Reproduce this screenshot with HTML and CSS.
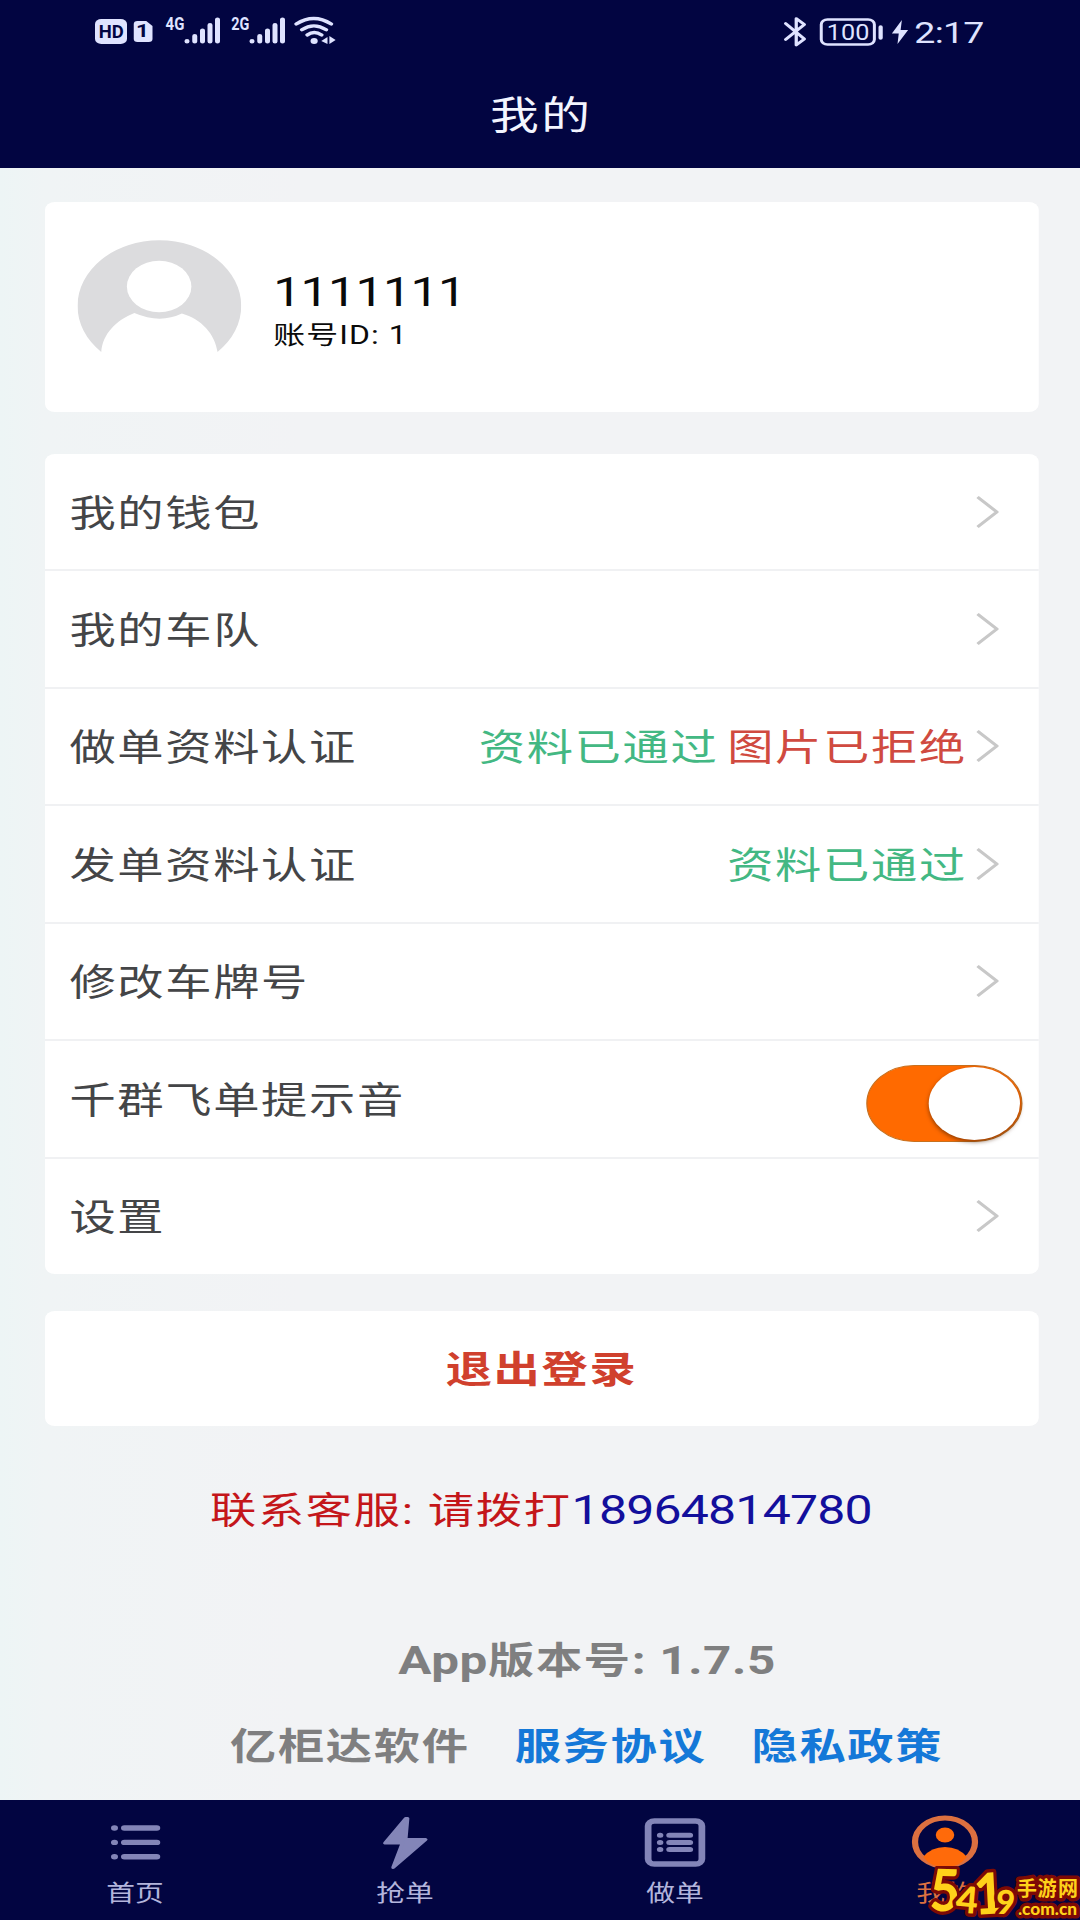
FILE: index.html
```html
<!DOCTYPE html>
<html lang="zh-CN">
<head>
<meta charset="utf-8">
<title>我的</title>
<link rel="stylesheet" href="styles.css">
</head>
<body>
<div class="screen">
  <header class="top">
    <div class="status">
      <svg class="status-left" viewBox="0 0 192 30" width="192" height="30">
        <rect x="0" y="4" width="25.6" height="25" rx="5" fill="#dfe3ff"/>
        <text x="3" y="22.8" class="st-hd" textLength="20" lengthAdjust="spacingAndGlyphs">HD</text>
        <path d="M34 6h7l5 5v13q0 3-3 3h-9q-3 0-3-3V9q0-3 3-3z" fill="#dfe3ff"/>
        <text x="38" y="22.5" class="st-hd" text-anchor="middle">1</text>
        <text x="56.5" y="15" class="st-net" textLength="15" lengthAdjust="spacingAndGlyphs">4G</text>
        <g stroke="#dfe3ff" stroke-width="4" stroke-linecap="round">
          <path d="M73.6 26v.5M79.8 21v5.500M86 15.500v11M92 10v16.500M98 4.500v22"/>
          <path d="M125.600 26v.5M131.800 21v5.500M138 15.500v11M144 10v16.500M150 4.500v22"/>
        </g>
        <text x="109" y="15" class="st-net" textLength="14.500" lengthAdjust="spacingAndGlyphs">2G</text>
        <g fill="none" stroke="#dfe3ff" stroke-width="3.200" stroke-linecap="round">
          <path d="M161 9q14-11 28 0M165.500 14.800q9.500-8 19.500 0M169.800 20q5.500-5 11.500 0"/>
        </g>
        <circle cx="175.300" cy="26" r="2.900" fill="#dfe3ff"/>
        <path d="M181 26l5-4v7zM187.500 21v8l5-4z" fill="#dfe3ff"/>
      </svg>
      <svg class="status-right" viewBox="0 0 164 32" width="164" height="32">
        <path d="M1.500 8.500l15 15.500-6.500 6V3.500l6.500 6L1.500 24.500" fill="none" stroke="#dfe3ff" stroke-width="2.600" stroke-linejoin="round" stroke-linecap="round"/>
        <rect x="30" y="4.500" width="42.500" height="25" rx="5" fill="none" stroke="#dfe3ff" stroke-width="2.400"/>
        <text x="34.500" y="25" class="st-batt" textLength="34" lengthAdjust="spacingAndGlyphs">100</text>
        <path d="M77.500 12v11" stroke="#dfe3ff" stroke-width="3.400" stroke-linecap="round"/>
        <path d="M94.500 5l-8 13.500h5.500L91 29l8.500-14H93.500z" fill="#dfe3ff"/>
        <text x="104.500" y="28" class="st-time" textLength="56">2:17</text>
      </svg>
    </div>
    <h1 class="title">我的</h1>
  </header>

  <main class="content">
    <section class="card profile">
      <svg class="avatar" viewBox="0 0 131 112" width="131" height="112">
        <path fill="#dcdcde" d="M19 112A65.500 65.500 0 1 1 112 112C110 94 99 79 83.500 73.500Q66 84 45.500 73C31 80 20 94 19 112z"/>
        <circle cx="65.300" cy="46.500" r="25.800" fill="#fff"/>
      </svg>
      <div class="who">
        <div class="name">1111111</div>
        <div class="uid">账号ID: 1</div>
      </div>
    </section>

    <section class="card menu">
      <div class="row"><span>我的钱包</span><svg class="chev" viewBox="0 0 18 34"><path d="M1 2l15.500 15L1 32"/></svg></div>
      <div class="row"><span>我的车队</span><svg class="chev" viewBox="0 0 18 34"><path d="M1 2l15.500 15L1 32"/></svg></div>
      <div class="row"><span>做单资料认证</span><div class="state"><span class="ok">资料已通过</span><span class="bad">图片已拒绝</span></div><svg class="chev" viewBox="0 0 18 34"><path d="M1 2l15.500 15L1 32"/></svg></div>
      <div class="row"><span>发单资料认证</span><div class="state"><span class="ok">资料已通过</span></div><svg class="chev" viewBox="0 0 18 34"><path d="M1 2l15.500 15L1 32"/></svg></div>
      <div class="row"><span>修改车牌号</span><svg class="chev" viewBox="0 0 18 34"><path d="M1 2l15.500 15L1 32"/></svg></div>
      <div class="row"><span>千群飞单提示音</span><div class="switch"><i class="knob"></i></div></div>
      <div class="row"><span>设置</span><svg class="chev" viewBox="0 0 18 34"><path d="M1 2l15.500 15L1 32"/></svg></div>
    </section>

    <button class="card logout">退出登录</button>
    <p class="support">联系客服: 请拨打<a class="phone">18964814780</a></p>
    <p class="version"><span class="latin">App</span>版本号<span class="latin">: 1.7.5</span></p>
    <p class="legal"><span>亿柜达软件</span><a>服务协议</a><a>隐私政策</a></p>
  </main>

  <nav class="tabs">
    <div class="tab">
      <svg viewBox="0 0 54 56" width="54" height="56"><g stroke="#8385b8" stroke-width="5.400" stroke-linecap="round"><path d="M10.500 14h.2M10.500 28.400h.2M10.500 42.800h.2M18.500 14h26M18.500 28.400h26M18.500 42.800h26"/></g></svg>
      <span>首页</span>
    </div>
    <div class="tab">
      <svg viewBox="0 0 54 56" width="54" height="56"><path d="M27.500 4.500L11 29h14l-7.500 24.500L43.500 25.500H27.500L29 4.500z" fill="#8385b8" stroke="#8385b8" stroke-width="3" stroke-linejoin="round"/></svg>
      <span>抢单</span>
    </div>
    <div class="tab">
      <svg viewBox="0 0 54 56" width="54" height="56"><rect x="5.500" y="7" width="43" height="43" rx="5" fill="none" stroke="#8385b8" stroke-width="5.400"/><g stroke="#8385b8" stroke-width="5" stroke-linecap="round"><path d="M15 21.200h.2M15 28.400h.2M15 35.600h.2M22.500 21.200h16.500M22.500 28.400h16.500M22.500 35.600h16.500"/></g></svg>
      <span>做单</span>
    </div>
    <div class="tab active">
      <svg viewBox="0 0 54 56" width="54" height="56"><circle cx="27" cy="28" r="24" fill="none" stroke="#dc7040" stroke-width="5"/><circle cx="27" cy="21" r="7.400" fill="#ff6a0a"/><path d="M9.500 43Q16 33 27 33t17.500 10Q38 53.500 27 53.500T9.500 43z" fill="#ff6a0a"/></svg>
      <span>我的</span>
    </div>
  </nav>
</div>

<svg class="badge" viewBox="0 0 152 54" width="152" height="54">
  <g class="badge-ink">
    <text x="2" y="45" font-size="58" textLength="30" lengthAdjust="spacingAndGlyphs" transform="rotate(2 16 25)">5</text>
    <text x="28" y="47" font-size="37" textLength="22" lengthAdjust="spacingAndGlyphs" transform="rotate(5 38 35)">4</text>
    <text x="46" y="48" font-size="57" textLength="30" lengthAdjust="spacingAndGlyphs" transform="rotate(-3 60 30)">1</text>
    <text x="68" y="48" font-size="33" textLength="19" lengthAdjust="spacingAndGlyphs" transform="rotate(3 77 38)">9</text>
    <text class="badge-cn" x="89" y="29.500" font-size="20" textLength="61">手游网</text>
    <text class="badge-url" x="90" y="49" font-size="17" textLength="59" lengthAdjust="spacingAndGlyphs">.com.cn</text>
  </g>
</svg>
</body>
</html>
```
FILE: styles.css
```css
* { box-sizing: border-box; }

body {
  margin: 0;
  position: relative;
  width: 1080px;
  height: 1920px;
  overflow: hidden;
  background: #f2f3f5;
  font-family: Roboto, "Noto Sans CJK SC", sans-serif;
}

/* 864 units wide, stretched to the full 1080px width */
.screen {
  width: 864px;
  height: 1920px;
  transform: scaleX(1.25);
  transform-origin: 0 0;
  display: flex;
  flex-direction: column;
  background: linear-gradient(90deg, #edf5f5 0, #f0f4f5 36px, #f2f3f5 240px);
}

.top {
  height: 168px;
  background: #020541;
  color: #f3f5ff;
}

.status {
  height: 60px;
  padding: 15px 73.500px 0 76px;
  display: flex;
  justify-content: space-between;
  align-items: flex-start;
}
.status svg { overflow: visible; }

.st-hd { font: 700 18px Roboto, sans-serif; fill: #020541; }
.st-net { font: 700 18px Roboto, sans-serif; fill: #dfe3ff; }
.st-batt { font: 400 22px Roboto, sans-serif; fill: #dfe3ff; }
.st-time { font: 400 30px Roboto, sans-serif; fill: #dfe3ff; }

.title {
  margin: 0;
  padding-left: 2px;
  font-size: 39px;
  font-weight: 400;
  line-height: 112px;
  letter-spacing: 2px;
  text-align: center;
  height: 108px;
}

.content {
  height: 1632px;
  padding: 34px 33.500px 0 36px;
}

.card {
  background: #fff;
  border-radius: 8px;
}

.profile {
  height: 210px;
  padding: 38px 0 0 25.500px;
  display: flex;
  gap: 26px;
  margin-bottom: 42px;
}

.who { padding-top: 30px; color: #0a0a0a; }
.name { font-size: 40px; line-height: 46px; letter-spacing: -.5px; }
.uid { font-size: 25.500px; line-height: 38px; letter-spacing: .9px; }

.menu { height: 819.500px; margin-bottom: 37px; }

.row {
  height: 117.500px;
  padding: 0 31.500px 0 19.500px;
  display: flex;
  align-items: center;
  border-bottom: 2px solid #f0f1f3;
  color: #444547;
  font-size: 37px;
  line-height: 60px;
  letter-spacing: 1.350px;
}
.row:first-child { height: 117px; }
.row:last-child { height: 115px; border-bottom: 0; }
.row span { padding-top: 6px; }

.chev {
  width: 18px;
  height: 34px;
  margin-left: auto;
  fill: none;
  stroke: #c8c8c8;
  stroke-width: 2.800;
}

.state { margin-left: auto; display: flex; gap: 7px; }
.state + .chev { margin-left: 7.500px; }
.ok { color: #43b883; }
.bad { color: #d04a40; }

.switch {
  margin: 10px -19px 0 auto;
  width: 125px;
  height: 77px;
  padding: 2px;
  border-radius: 39px;
  background: #ff6a00;
  border: 1px solid #c8701e;
  display: flex;
  justify-content: flex-end;
  align-items: center;
}
.knob {
  width: 73px;
  height: 73px;
  border-radius: 50%;
  background: #fff;
  box-shadow: 0 2px 4px rgba(70, 30, 0, .6);
  margin-right: -1px;
}

.logout {
  display: block;
  width: 100%;
  height: 115px;
  margin: 0;
  padding: 4px 0 0;
  border: 0;
  font: 700 37px/111px Roboto, "Noto Sans CJK SC", sans-serif;
  letter-spacing: 1.350px;
  color: #d0402d;
}

p { margin: 0; white-space: pre; letter-spacing: 1.350px; font-size: 37px; line-height: 60px; }

.support { margin-top: 55px; padding-left: 132px; color: #c4161a; }
.phone { font-size: 40px; letter-spacing: -.65px; color: #130f9c; }

.version { margin-top: 89px; padding-left: 282.500px; color: #7f7f80; font-weight: 700; }
.latin { font-size: 39.500px; letter-spacing: .5px; }

.legal {
  margin-top: 26px;
  padding-left: 148px;
  display: flex;
  gap: 36px;
  color: #7f7f80;
  font-weight: 700;
}
.legal a { color: #1478d8; }

.tabs {
  height: 120px;
  background: #020541;
  display: grid;
  grid-template-columns: repeat(4, 1fr);
}
.tab {
  display: flex;
  flex-direction: column;
  align-items: center;
  padding-top: 14px;
  color: #b3b5dc;
  font-size: 23px;
  line-height: 48px;
}
.tab svg { flex: none; }
.active { color: #dc7040; }

.badge { position: absolute; right: 0; bottom: 0; }
.badge-ink {
  font-family: Lato, sans-serif;
  font-weight: 900;
  fill: #ffd21a;
  stroke: #7d0a05;
  stroke-width: 7;
  stroke-linejoin: round;
  paint-order: stroke;
}
.badge-cn { font-family: "Noto Sans CJK SC", sans-serif; font-weight: 700; }
.badge-url { font-family: Lato, sans-serif; }
```
